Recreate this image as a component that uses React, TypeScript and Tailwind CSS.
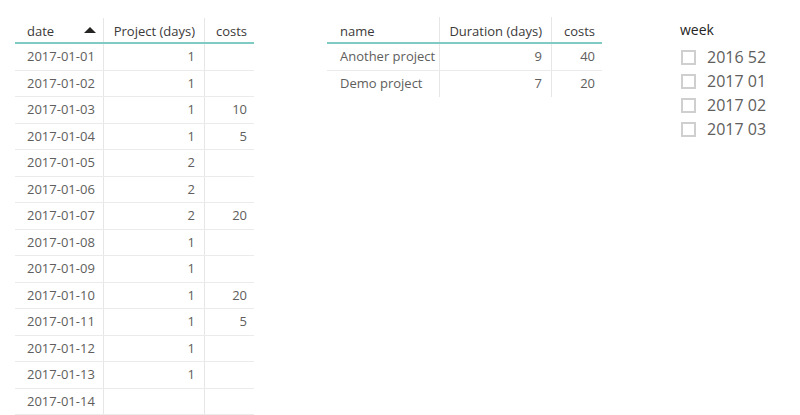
const dates = [
  { date: '2017-01-01', days: '1', costs: '' },
  { date: '2017-01-02', days: '1', costs: '' },
  { date: '2017-01-03', days: '1', costs: '10' },
  { date: '2017-01-04', days: '1', costs: '5' },
  { date: '2017-01-05', days: '2', costs: '' },
  { date: '2017-01-06', days: '2', costs: '' },
  { date: '2017-01-07', days: '2', costs: '20' },
  { date: '2017-01-08', days: '1', costs: '' },
  { date: '2017-01-09', days: '1', costs: '' },
  { date: '2017-01-10', days: '1', costs: '20' },
  { date: '2017-01-11', days: '1', costs: '5' },
  { date: '2017-01-12', days: '1', costs: '' },
  { date: '2017-01-13', days: '1', costs: '' },
  { date: '2017-01-14', days: '', costs: '' },
];

const projects = [
  { name: 'Another project', days: '9', costs: '40' },
  { name: 'Demo project', days: '7', costs: '20' },
];

const weeks = ['2016 52', '2017 01', '2017 02', '2017 03'];

const App = () => {
  return (
    <div
      className="w-[800px] h-[415px] bg-white flex items-start text-[13px] text-[#605e5c] overflow-hidden"
      style={{ fontFamily: '"Open Sans", "Noto Sans", sans-serif' }}
    >
      {/* Date table */}
      <div className="ml-[15px] mt-[18px] w-[239px] shrink-0 flex flex-col">
        <div className="flex h-[26px] shrink-0 border-b-2 border-[#7fcbc3] text-[#3b3a39]">
          <div className="w-[89px] pl-[12px] pr-[8px] pt-[4px] flex items-center justify-between border-r border-[#e6e6e6]">
            <span>date</span>
            <svg width="12" height="6" viewBox="0 0 12 6" className="mr-[-1px] mt-[-4px]">
              <path d="M0 6 L6 0 L12 6 Z" fill="#252423" />
            </svg>
          </div>
          <div className="w-[101px] pr-[9px] pt-[4px] flex items-center justify-end border-r border-[#e6e6e6]">
            Project (days)
          </div>
          <div className="flex-1 pr-[7px] pt-[4px] flex items-center justify-end">costs</div>
        </div>
        {dates.map((r) => (
          <div key={r.date} className="flex h-[26.5px] shrink-0 border-b border-[#ebebeb]">
            <div className="w-[89px] pl-[12px] flex items-center border-r border-[#e6e6e6]">{r.date}</div>
            <div className="w-[101px] pr-[9px] flex items-center justify-end border-r border-[#e6e6e6]">
              {r.days}
            </div>
            <div className="flex-1 pr-[7px] flex items-center justify-end">{r.costs}</div>
          </div>
        ))}
      </div>

      {/* Project table */}
      <div className="ml-[73px] mt-[17px] w-[275px] shrink-0 flex flex-col">
        <div className="flex h-[27px] shrink-0 border-b-2 border-[#7fcbc3] text-[#3b3a39]">
          <div className="w-[113px] pl-[13px] pt-[4px] flex items-center border-r border-[#e6e6e6]">name</div>
          <div className="w-[112px] pr-[9px] pt-[4px] flex items-center justify-end border-r border-[#e6e6e6]">
            Duration (days)
          </div>
          <div className="flex-1 pr-[7px] pt-[4px] flex items-center justify-end">costs</div>
        </div>
        {projects.map((p, i) => (
          <div
            key={p.name}
            className={`flex h-[26.7px] shrink-0 ${i < projects.length - 1 ? 'border-b border-[#ebebeb]' : ''}`}
          >
            <div className="w-[113px] pl-[13px] flex items-center border-r border-[#e6e6e6]">{p.name}</div>
            <div className="w-[112px] pr-[9px] flex items-center justify-end border-r border-[#e6e6e6]">
              {p.days}
            </div>
            <div className="flex-1 pr-[7px] flex items-center justify-end">{p.costs}</div>
          </div>
        ))}
      </div>

      {/* Week slicer */}
      <div className="ml-[78px] mt-[20px] flex flex-col">
        <div className="text-[14px] text-[#252423] leading-[20px]">week</div>
        <div className="flex flex-col mt-[5px]">
          {weeks.map((w) => (
            <div key={w} className="flex items-center h-[24px]">
              <div className="w-[15px] h-[15px] border-2 border-[#cfcfcf] ml-[1px] mr-[11px]" />
              <span className="text-[16px] text-[#605e5c]">{w}</span>
            </div>
          ))}
        </div>
      </div>
    </div>
  );
};

export default App;
